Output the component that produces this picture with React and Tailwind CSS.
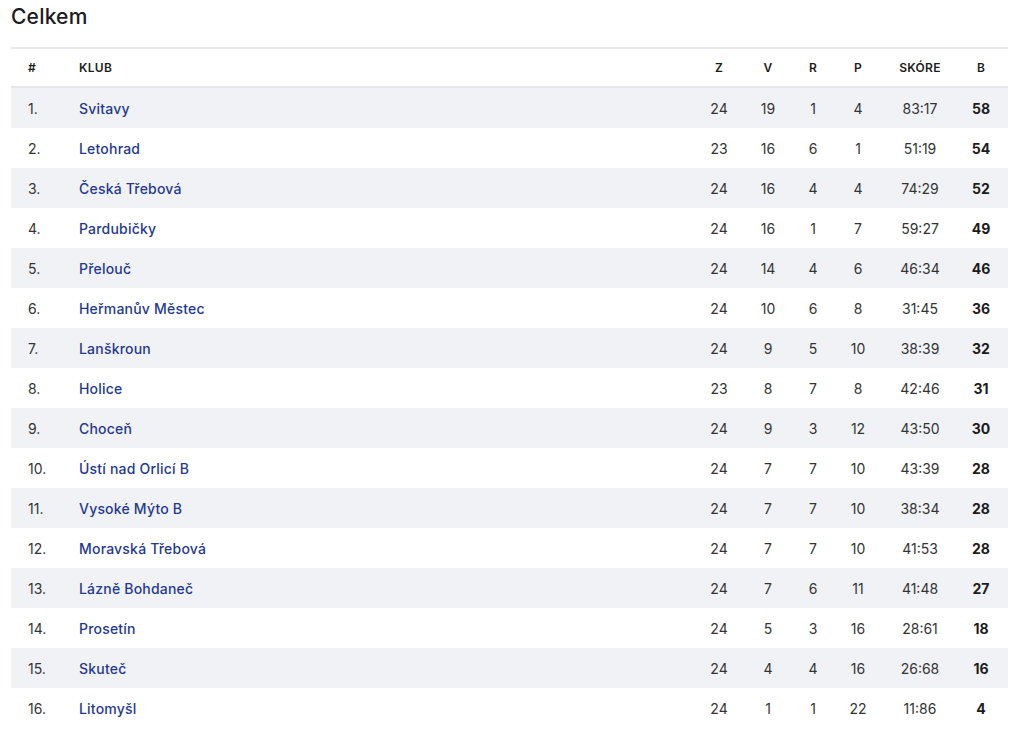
import React from 'react';

const rows = [
  ['1.', 'Svitavy', 24, 19, 1, 4, '83:17', 58],
  ['2.', 'Letohrad', 23, 16, 6, 1, '51:19', 54],
  ['3.', 'Česká Třebová', 24, 16, 4, 4, '74:29', 52],
  ['4.', 'Pardubičky', 24, 16, 1, 7, '59:27', 49],
  ['5.', 'Přelouč', 24, 14, 4, 6, '46:34', 46],
  ['6.', 'Heřmanův Městec', 24, 10, 6, 8, '31:45', 36],
  ['7.', 'Lanškroun', 24, 9, 5, 10, '38:39', 32],
  ['8.', 'Holice', 23, 8, 7, 8, '42:46', 31],
  ['9.', 'Choceň', 24, 9, 3, 12, '43:50', 30],
  ['10.', 'Ústí nad Orlicí B', 24, 7, 7, 10, '43:39', 28],
  ['11.', 'Vysoké Mýto B', 24, 7, 7, 10, '38:34', 28],
  ['12.', 'Moravská Třebová', 24, 7, 7, 10, '41:53', 28],
  ['13.', 'Lázně Bohdaneč', 24, 7, 6, 11, '41:48', 27],
  ['14.', 'Prosetín', 24, 5, 3, 16, '28:61', 18],
  ['15.', 'Skuteč', 24, 4, 4, 16, '26:68', 16],
  ['16.', 'Litomyšl', 24, 1, 1, 22, '11:86', 4],
];

const grid = 'grid grid-cols-[68px_1fr_48px_50px_40px_50px_74px_48px] pr-[3px] items-center';

export default function App() {
  return (
    <div className="min-h-[729px] bg-white pl-[11px] pr-[16px] font-['Inter',sans-serif] text-[#2a2a2a]">
      <h2 className="pt-[5px] h-[47px] text-[21px] leading-[24px] font-medium tracking-[0.2px] text-[#1c1c1c]">Celkem</h2>
      <div className="border-t-2 border-[#e5e7eb]">
        {/* header */}
        <div className={`${grid} h-[39px] border-b-2 border-[#e5e7eb] text-[12px] font-semibold tracking-[0.3px] text-[#1c1c1c]`}>
          <div className="pl-[17px]">#</div>
          <div>KLUB</div>
          <div className="text-center">Z</div>
          <div className="text-center">V</div>
          <div className="text-center">R</div>
          <div className="text-center">P</div>
          <div className="text-center">SKÓRE</div>
          <div className="text-center">B</div>
        </div>
        {rows.map((r, i) => (
          <div
            key={r[0]}
            className={`${grid} h-[40px] text-[14px] ${i % 2 === 0 ? 'bg-[#f1f2f6]' : 'bg-white'}`}
          >
            <div className="pl-[17px] text-[#333]">{r[0]}</div>
            <div className="font-medium tracking-[0.2px] text-[#1f3a8f]">{r[1]}</div>
            <div className="text-center text-[#333]">{r[2]}</div>
            <div className="text-center text-[#333]">{r[3]}</div>
            <div className="text-center text-[#333]">{r[4]}</div>
            <div className="text-center text-[#333]">{r[5]}</div>
            <div className="text-center text-[#333]">{r[6]}</div>
            <div className="text-center font-bold text-[#1c1c1c]">{r[7]}</div>
          </div>
        ))}
      </div>
    </div>
  );
}
